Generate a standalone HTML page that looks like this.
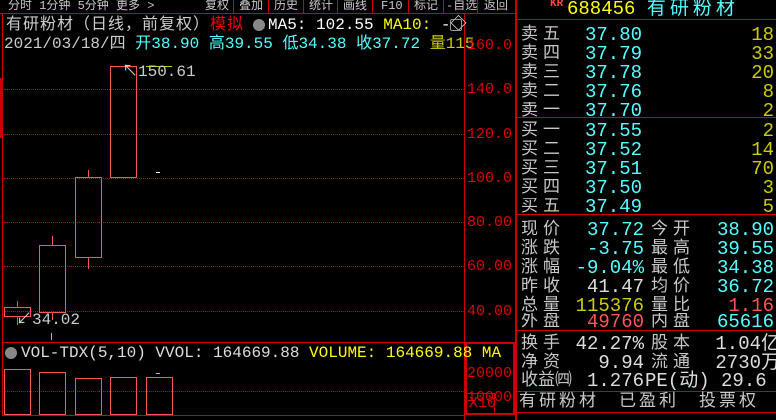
<!DOCTYPE html>
<html><head><meta charset="utf-8"><style>
*{margin:0;padding:0;box-sizing:border-box}
body{width:776px;height:420px;background:#000;overflow:hidden;position:relative;font-family:"Liberation Mono","Noto Sans CJK SC",monospace;color:#c8c8c8}
.a{position:absolute;white-space:nowrap}
.h{position:absolute;background:#c00;height:1px}
.v{position:absolute;background:#c00;width:1px}
.t{font-size:12px;line-height:13px;top:0;color:#c8c8c8}
.s16{font-size:16px;line-height:17px}
.r{font-size:19px;line-height:19px}
.lab{font-size:17px;line-height:19px;letter-spacing:5px;color:#c8c8c8}
.cy{color:#5ff}.yl{color:#cc0}.rd{color:#f55}.wh{color:#ddd}.Y{color:#ff0}
.ax{font-size:15px;line-height:15px;color:#d00;left:467px}
.dot{position:absolute;height:0;border-top:1px dotted #c00}
.c{position:absolute;border:1px solid #f55}
.w{position:absolute;width:1px;background:#f55}
</style></head><body>
<div class="a t" style="left:8px">分时 1分钟 5分钟 更多 &gt;</div>
<div class="a t" style="left:205px">复权</div>
<div class="a t" style="left:239px">叠加</div>
<div class="a t" style="left:274px">历史</div>
<div class="a t" style="left:309px">统计</div>
<div class="a t" style="left:343px">画线</div>
<div class="a t" style="left:381px">F10</div>
<div class="a t" style="left:414px">标记</div>
<div class="a t" style="left:446px">-自选</div>
<div class="a t" style="left:484px">返回</div>
<div class="v" style="left:233px;top:0;height:13px"></div>
<div class="v" style="left:268px;top:0;height:13px"></div>
<div class="v" style="left:303px;top:0;height:13px"></div>
<div class="v" style="left:337px;top:0;height:13px"></div>
<div class="v" style="left:372px;top:0;height:13px"></div>
<div class="v" style="left:408px;top:0;height:13px"></div>
<div class="v" style="left:443px;top:0;height:13px"></div>
<div class="v" style="left:477px;top:0;height:13px"></div>
<div class="h" style="left:0;top:13px;width:516px"></div>
<div class="v" style="left:2px;top:13px;height:402px"></div>
<div class="v" style="left:464px;top:13px;height:407px"></div>
<div class="v" style="left:515px;top:0;height:420px;width:2px"></div>
<div class="h" style="left:2px;top:342px;width:462px"></div>
<div class="h" style="left:2px;top:415px;width:462px"></div>
<div class="a" style="left:465px;top:342px;width:50px;height:73px;border:2px solid #c00"></div>
<div class="a" style="left:466px;top:393px;width:29px;height:22px;border:1px solid #c00;color:#d00;font-size:15px;line-height:20px;padding-left:2px">X10</div>
<div class="a s16" style="left:6px;top:17px;color:#ccc;letter-spacing:1px">有研粉材（日线，前复权）<span style="color:#e00">模拟</span></div>
<div class="a" style="left:253px;top:19px;width:12px;height:12px;border-radius:6px;background:#888"></div>
<div class="a s16" style="left:268px;top:17px;color:#fff">MA5: 102.55 <span class="Y">MA10:</span> -◇</div>
<div class="a" style="left:450px;top:19px;width:12px;height:12px;border:1px solid #999;border-radius:2px"></div>
<div class="a s16" style="left:4px;top:36px;color:#ccc">2021/03/18/四 <span class="cy">开38.90 高39.55 低34.38 收37.72</span> <span class="yl">量115</span></div>
<div class="a ax" style="top:38px">160.0</div>
<div class="a ax" style="top:82px">140.0</div>
<div class="a ax" style="top:127px">120.0</div>
<div class="a ax" style="top:171px">100.0</div>
<div class="a ax" style="top:215px">80.00</div>
<div class="a ax" style="top:259px">60.00</div>
<div class="a ax" style="top:304px">40.00</div>
<div class="a ax" style="top:366px">20000</div>
<div class="a ax" style="top:390px">10000</div>
<div class="dot" style="left:4px;top:89px;width:460px"></div>
<div class="dot" style="left:4px;top:134px;width:460px"></div>
<div class="dot" style="left:4px;top:178px;width:460px"></div>
<div class="dot" style="left:4px;top:222px;width:460px"></div>
<div class="dot" style="left:4px;top:266px;width:460px"></div>
<div class="dot" style="left:4px;top:311px;width:460px"></div>
<div class="dot" style="left:4px;top:391px;width:460px"></div>
<div class="a" style="left:0;top:78px;width:3px;height:60px;background:#c00"></div>
<div class="w" style="left:17px;top:301px;height:6px"></div>
<div class="c" style="left:4px;top:307px;width:27px;height:10px"></div>
<div class="w" style="left:17px;top:317px;height:8px"></div>
<div class="w" style="left:52px;top:236px;height:9px"></div>
<div class="c" style="left:39px;top:245px;width:27px;height:68px"></div>
<div class="w" style="left:52px;top:313px;height:7px"></div>
<div class="w" style="left:88px;top:170px;height:7px"></div>
<div class="c" style="left:75px;top:177px;width:27px;height:81px"></div>
<div class="w" style="left:88px;top:258px;height:11px"></div>
<div class="c" style="left:110px;top:66px;width:27px;height:112px"></div>
<div class="a" style="left:146px;top:66px;width:26px;height:1px;background:#cc0"></div>
<div class="a" style="left:156px;top:172px;width:4px;height:1px;background:#fff"></div>
<div class="a s16" style="left:122px;top:64px;color:#ccc">↖150.61</div>
<div class="a s16" style="left:16px;top:312px;color:#ccc">↙34.02</div>
<div class="a" style="left:51px;top:333px;width:1px;height:7px;background:#cc0"></div>
<div class="a" style="left:5px;top:347px;width:12px;height:12px;border-radius:6px;background:#888"></div>
<div class="a s16" style="left:21px;top:345px;color:#ddd">VOL-TDX(5,10) VVOL: 164669.88 <span class="Y">VOLUME: 164669.88 MA</span></div>
<div class="c" style="left:4px;top:369px;width:27px;height:46px"></div>
<div class="c" style="left:39px;top:372px;width:27px;height:43px"></div>
<div class="c" style="left:75px;top:378px;width:27px;height:37px"></div>
<div class="c" style="left:110px;top:377px;width:27px;height:38px"></div>
<div class="c" style="left:146px;top:377px;width:27px;height:38px"></div>
<div class="a" style="left:156px;top:373px;width:4px;height:1px;background:#cc0"></div>
<div class="a" style="left:550px;top:-2px;font-size:11px;color:#f44;font-weight:bold">KR</div>
<div class="a" style="left:567px;top:0;font-size:19px;line-height:19px;color:#ff0">688456 <span class="cy" style="letter-spacing:4px">有研粉材</span></div>
<div class="h" style="left:517px;top:19px;width:259px"></div>
<div class="h" style="left:517px;top:117px;width:259px"></div>
<div class="h" style="left:517px;top:214px;width:259px"></div>
<div class="h" style="left:517px;top:330px;width:259px"></div>
<div class="h" style="left:517px;top:391px;width:259px"></div>
<div class="h" style="left:517px;top:412px;width:259px"></div>
<div class="a lab" style="left:521px;top:26px">卖五</div><div class="a r cy" style="left:585px;top:26px">37.80</div><div class="a r yl" style="left:714px;width:60px;text-align:right;top:26px">18</div>
<div class="a lab" style="left:521px;top:45px">卖四</div><div class="a r cy" style="left:585px;top:45px">37.79</div><div class="a r yl" style="left:714px;width:60px;text-align:right;top:45px">33</div>
<div class="a lab" style="left:521px;top:64px">卖三</div><div class="a r cy" style="left:585px;top:64px">37.78</div><div class="a r yl" style="left:714px;width:60px;text-align:right;top:64px">20</div>
<div class="a lab" style="left:521px;top:83px">卖二</div><div class="a r cy" style="left:585px;top:83px">37.76</div><div class="a r yl" style="left:714px;width:60px;text-align:right;top:83px">8</div>
<div class="a lab" style="left:521px;top:102px;height:15px;overflow:hidden">卖一</div><div class="a r cy" style="left:585px;top:102px;height:15px;overflow:hidden">37.70</div><div class="a r yl" style="left:714px;width:60px;text-align:right;top:102px;height:15px;overflow:hidden">2</div>
<div class="a lab" style="left:521px;top:122px">买一</div><div class="a r cy" style="left:585px;top:122px">37.55</div><div class="a r yl" style="left:714px;width:60px;text-align:right;top:122px">2</div>
<div class="a lab" style="left:521px;top:141px">买二</div><div class="a r cy" style="left:585px;top:141px">37.52</div><div class="a r yl" style="left:714px;width:60px;text-align:right;top:141px">14</div>
<div class="a lab" style="left:521px;top:160px">买三</div><div class="a r cy" style="left:585px;top:160px">37.51</div><div class="a r yl" style="left:714px;width:60px;text-align:right;top:160px">70</div>
<div class="a lab" style="left:521px;top:179px">买四</div><div class="a r cy" style="left:585px;top:179px">37.50</div><div class="a r yl" style="left:714px;width:60px;text-align:right;top:179px">3</div>
<div class="a lab" style="left:521px;top:198px;height:16px;overflow:hidden">买五</div><div class="a r cy" style="left:585px;top:198px;height:16px;overflow:hidden">37.49</div><div class="a r yl" style="left:714px;width:60px;text-align:right;top:198px;height:16px;overflow:hidden">5</div>
<div class="a lab" style="left:521px;top:221px">现价</div><div class="a r cy" style="left:560px;width:84px;text-align:right;top:221px">37.72</div><div class="a lab" style="left:651px;top:221px">今开</div><div class="a r cy" style="left:690px;width:84px;text-align:right;top:221px">38.90</div>
<div class="a lab" style="left:521px;top:240px">涨跌</div><div class="a r cy" style="left:560px;width:84px;text-align:right;top:240px">-3.75</div><div class="a lab" style="left:651px;top:240px">最高</div><div class="a r cy" style="left:690px;width:84px;text-align:right;top:240px">39.55</div>
<div class="a lab" style="left:521px;top:259px">涨幅</div><div class="a r cy" style="left:560px;width:84px;text-align:right;top:259px">-9.04%</div><div class="a lab" style="left:651px;top:259px">最低</div><div class="a r cy" style="left:690px;width:84px;text-align:right;top:259px">34.38</div>
<div class="a lab" style="left:521px;top:278px">昨收</div><div class="a r wh" style="left:560px;width:84px;text-align:right;top:278px">41.47</div><div class="a lab" style="left:651px;top:278px">均价</div><div class="a r cy" style="left:690px;width:84px;text-align:right;top:278px">36.72</div>
<div class="a lab" style="left:521px;top:297px">总量</div><div class="a r yl" style="left:560px;width:84px;text-align:right;top:297px">115376</div><div class="a lab" style="left:651px;top:297px">量比</div><div class="a r rd" style="left:690px;width:84px;text-align:right;top:297px">1.16</div>
<div class="a lab" style="left:521px;top:313px;height:17px;overflow:hidden">外盘</div><div class="a r rd" style="left:560px;width:84px;text-align:right;top:313px;height:17px;overflow:hidden">49760</div><div class="a lab" style="left:651px;top:313px;height:17px;overflow:hidden">内盘</div><div class="a r cy" style="left:690px;width:84px;text-align:right;top:313px;height:17px;overflow:hidden">65616</div>
<div class="a lab" style="left:521px;top:335px">换手</div><div class="a r wh" style="left:560px;width:84px;text-align:right;top:335px">42.27%</div><div class="a lab" style="left:651px;top:335px">股本</div><div class="a r wh" style="left:690px;width:90px;text-align:right;top:335px">1.04亿</div>
<div class="a lab" style="left:521px;top:354px">净资</div><div class="a r wh" style="left:560px;width:84px;text-align:right;top:354px">9.94</div><div class="a lab" style="left:651px;top:354px">流通</div><div class="a r wh" style="left:690px;width:90px;text-align:right;top:354px">2730万</div>
<div class="a lab" style="left:521px;top:372px;letter-spacing:0">收益㈣</div><div class="a r wh" style="left:560px;width:84px;text-align:right;top:372px">1.276</div><div class="a r wh" style="left:645px;top:372px">PE(动) 29.6</div>
<div class="a" style="left:519px;top:393px;font-size:17px;line-height:19px;letter-spacing:3px;color:#c8c8c8">有研粉材　已盈利　投票权</div>
</body></html>
